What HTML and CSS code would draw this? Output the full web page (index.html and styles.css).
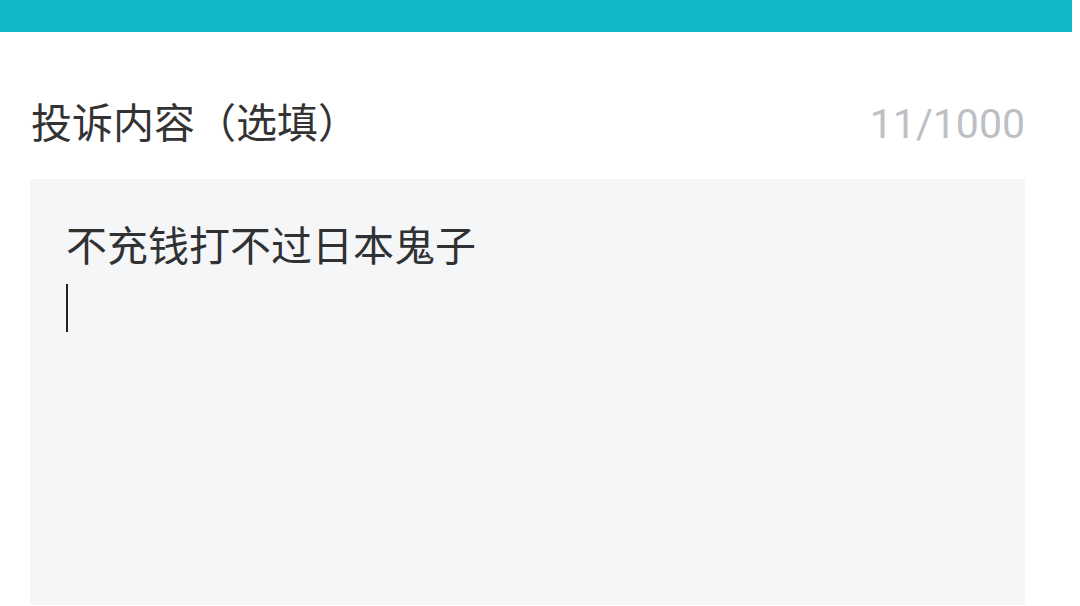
FILE: index.html
```html
<!DOCTYPE html>
<html lang="zh-CN">
<head>
<meta charset="utf-8">
<title>投诉内容</title>
<link rel="stylesheet" href="styles.css">
</head>
<body>
<div class="topbar"></div>
<main class="section">
  <div class="header">
    <span class="label">投诉内容（选填）</span>
    <span class="counter">11/1000</span>
  </div>
  <div class="box">
    <div class="content">不充钱打不过日本鬼子</div>
    <span class="cursor"></span>
  </div>
</main>
</body>
</html>
```

FILE: styles.css
```css
html, body {
  margin: 0;
  padding: 0;
  background: #ffffff;
}
body {
  width: 1080px;
  height: 606px;
  overflow: hidden;
  font-family: "Noto Sans CJK SC", "Noto Sans", sans-serif;
}
.topbar {
  height: 32px;
  margin-right: 8px;
  background: #13b8c8;
}
.section {
  padding: 0 55px 0 30px;
}
.header {
  display: flex;
  justify-content: space-between;
  align-items: baseline;
  margin-top: 64px;
  height: 48px;
  line-height: 48px;
}
.label {
  font-size: 41px;
  color: #333333;
  padding-left: 1px;
}
.counter {
  font-family: Roboto, "Noto Sans", sans-serif;
  font-size: 41px;
  color: #bcc0c4;
}
.box {
  margin-top: 35px;
  height: 426px;
  background: #f5f6f8;
  padding: 32px 36px 0 36px;
  box-sizing: border-box;
}
.content {
  font-size: 41px;
  line-height: 65px;
  color: #303133;
}
.cursor {
  display: block;
  width: 2px;
  height: 48px;
  margin-top: 8px;
  margin-left: 0;
  background: #222222;
}
```
